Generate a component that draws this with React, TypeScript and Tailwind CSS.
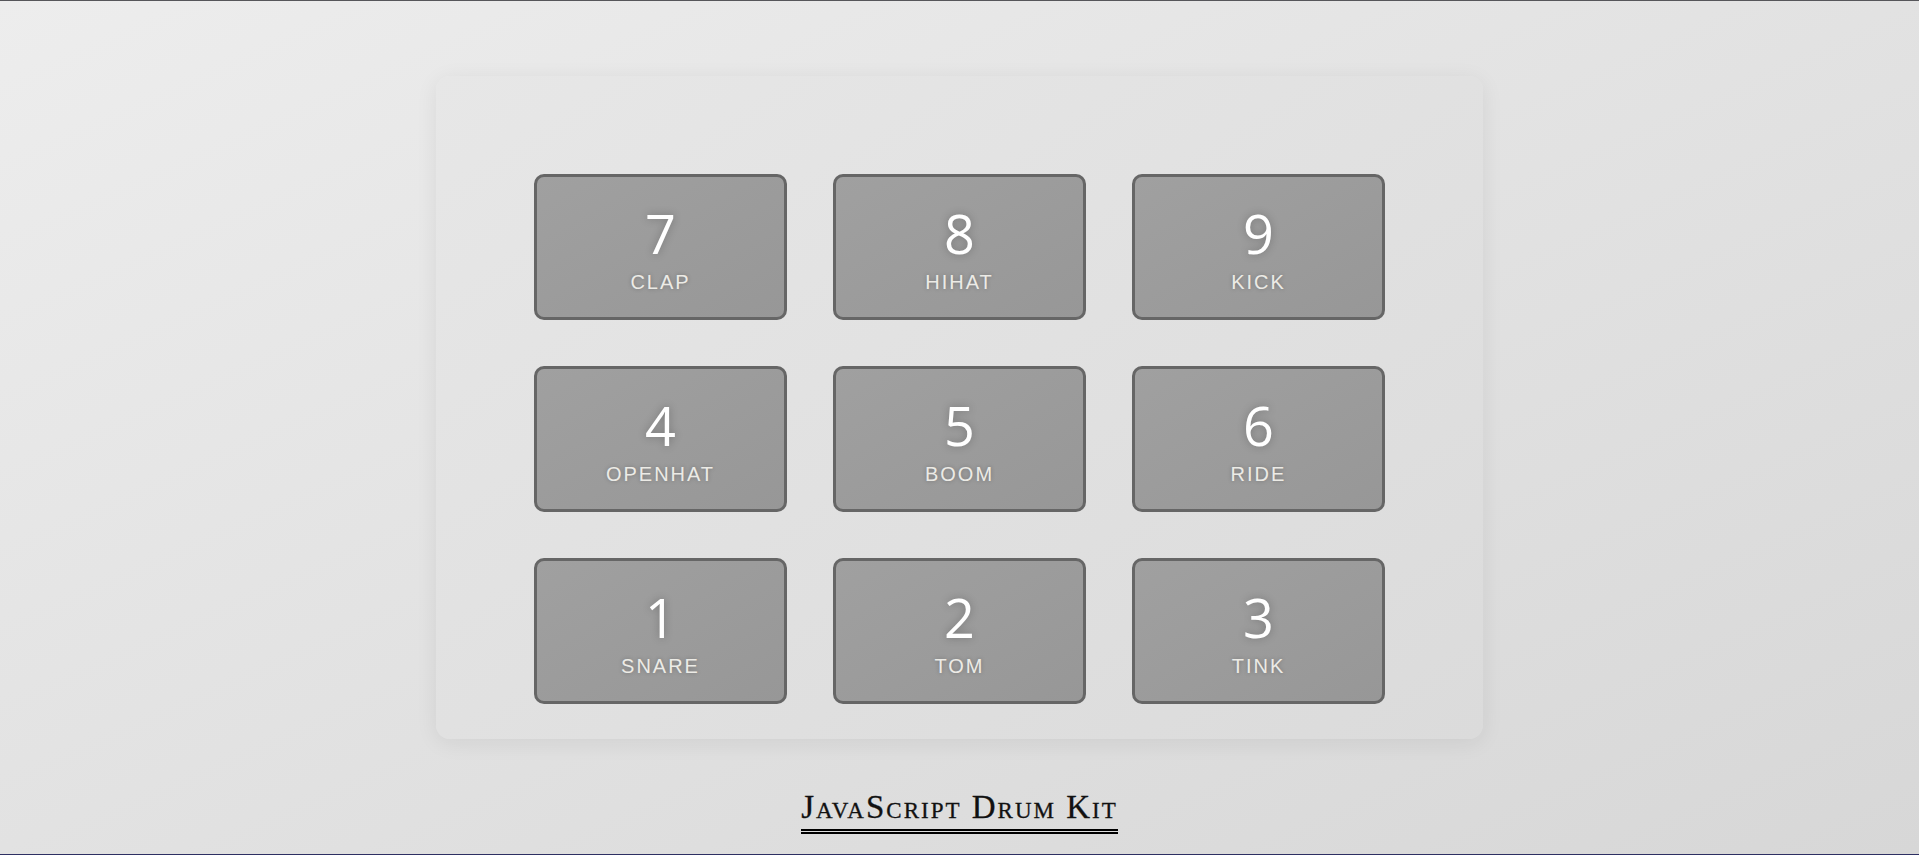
const keys = [
  { key: '7', sound: 'clap' },
  { key: '8', sound: 'hihat' },
  { key: '9', sound: 'kick' },
  { key: '4', sound: 'openhat' },
  { key: '5', sound: 'boom' },
  { key: '6', sound: 'ride' },
  { key: '1', sound: 'snare' },
  { key: '2', sound: 'tom' },
  { key: '3', sound: 'tink' },
];

export default function App() {
  return (
    <div className="flex h-[855px] flex-col items-center overflow-hidden border-t border-b border-t-[#56565a] border-b-[#2d2f62] bg-linear-to-br from-[#ededed] to-[#d7d7d7]">
      {/* Pads */}
      <div className="mt-[75px] rounded-[14px] bg-linear-to-br from-[#e7e7e7] to-[#dbdbdb] px-[98px] pt-[98px] pb-[35px] shadow-[0_4px_22px_rgba(0,0,0,0.07)]">
        <div className="grid grid-cols-[repeat(3,253px)] gap-x-[46px] gap-y-[46px]">
          {keys.map((k) => (
            <div
              key={k.key}
              className="flex h-[146px] flex-col items-center justify-center rounded-[10px] border-[3px] border-[#666] bg-linear-to-br from-[#a0a0a0] to-[#979797] pt-1"
            >
              <kbd className="font-['Open_Sans',sans-serif] text-[54px] font-medium leading-none text-white [text-shadow:0_0_8px_rgba(0,0,0,0.25)]">
                {k.key}
              </kbd>
              <span className="mt-[12px] font-['Liberation_Sans',Arial,sans-serif] text-[20px] leading-none tracking-[2px] text-[#ecebe6] uppercase [text-shadow:0_0_4px_rgba(0,0,0,0.25)]">
                {k.sound}
              </span>
            </div>
          ))}
        </div>
      </div>

      {/* Title */}
      <h1 className="mt-[52px] border-b-[5px] border-double border-black pb-[5px] font-['Liberation_Serif',serif] text-[33px] leading-none tracking-[2px] text-[#111] [font-variant:small-caps] [-webkit-text-stroke:0.3px_#111]">
        JavaScript Drum Kit
      </h1>
    </div>
  );
}
